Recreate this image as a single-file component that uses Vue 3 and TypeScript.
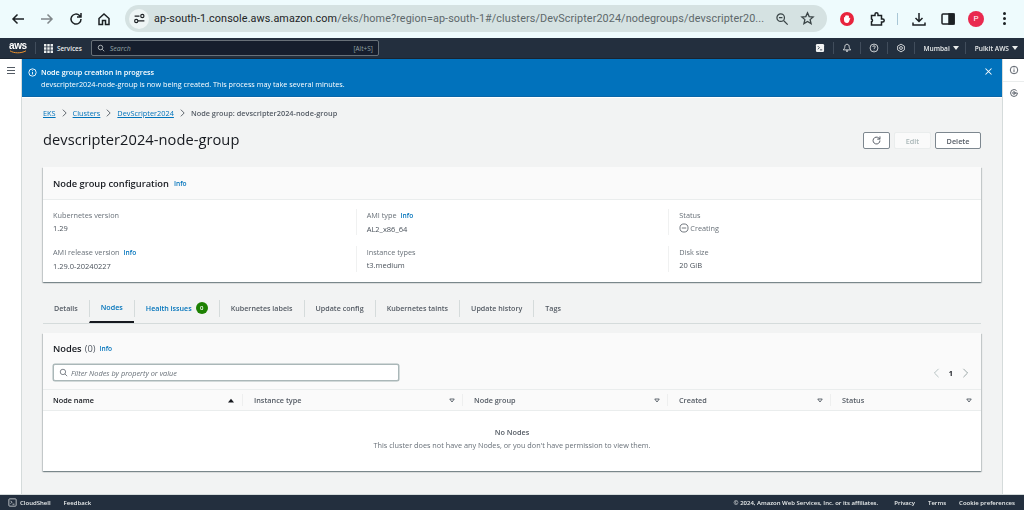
<script setup lang="ts">
interface Field { label: string; value: string; info?: boolean; status?: boolean }
const fields: Field[][] = [
  [{ label: 'Kubernetes version', value: '1.29' }, { label: 'AMI release version', value: '1.29.0-20240227', info: true }],
  [{ label: 'AMI type', value: 'AL2_x86_64', info: true }, { label: 'Instance types', value: 't3.medium' }],
  [{ label: 'Status', value: 'Creating', status: true }, { label: 'Disk size', value: '20 GiB' }],
]
const tabs = ['Details', 'Nodes', 'Health issues', 'Kubernetes labels', 'Update config', 'Kubernetes taints', 'Update history', 'Tags']
const cols = [
  { name: 'Node name', width: 200, sorted: true },
  { name: 'Instance type', width: 220 },
  { name: 'Node group', width: 205 },
  { name: 'Created', width: 163 },
  { name: 'Status', width: 150 },
]
</script>

<template>
  <div class="page">
    <header class="chrome">
      <svg class="ci first" viewBox="0 0 16 16"><path d="M14 8H3M7.500 3.500 3 8l4.500 4.500" /></svg>
      <svg class="ci dim" viewBox="0 0 16 16"><path d="M2 8h11M8.500 3.500 13 8l-4.500 4.500" /></svg>
      <svg class="ci" viewBox="0 0 16 16"><path d="M13 8a5 5 0 1 1-1.500-3.500L13 6M13 2v4H9" /></svg>
      <svg class="ci" viewBox="0 0 16 16"><path d="M3 7.500 8 3l5 4.500V13.500h-3.500V9.500h-3v4H3z" /></svg>
      <div class="omnibox">
        <span class="tune"><svg viewBox="0 0 16 16"><path d="M2 5h6M6 11h8" /><circle cx="11.500" cy="5" r="2" /><circle cx="4" cy="11" r="2" /></svg></span>
        <span class="url"><b>ap-south-1.console.aws.amazon.com</b>/eks/home?region=ap-south-1#/clusters/DevScripter2024/nodegroups/devscripter20...</span>
        <svg class="oi" viewBox="0 0 16 16"><circle cx="6.500" cy="6.500" r="4.300" /><path d="m10 10 4.500 4.500M4.500 6.500h4" /></svg>
        <svg class="oi star" viewBox="0 0 16 16"><path d="m8 2 1.800 4 4.200.4-3.200 2.800 1 4.300L8 11.200 4.200 13.500l1-4.300L2 6.400 6.200 6z" /></svg>
      </div>
      <div class="ext-tools">
        <svg class="adblock" viewBox="0 0 14 14"><circle cx="7" cy="7" r="7" /><path d="M4 5.500c0-.8 1-.8 1.100 0V4c0-.8 1.100-.8 1.200 0v-.5c0-.8 1.200-.8 1.300 0V4c.1-.8 1.300-.8 1.300 0v2.500l.6-.6c.5-.4 1 .1.700.6L8.800 10c-.4.600-1 1-1.800 1-1.800 0-3-1.200-3-3z" /></svg>
        <svg class="ci puzzle" viewBox="0 0 16 16"><path d="M2.500 4.500H6V3.200a1.500 1.500 0 0 1 3 0v1.300h3.500V8h1.200a1.500 1.500 0 0 1 0 3h-1.200v3h-10v-3.200a1.500 1.500 0 0 0 0-2.800z" /></svg>
        <i class="tool-sep"></i>
        <svg class="ci download" viewBox="0 0 16 16"><path d="M8 2v8.500M4.500 7 8 10.500 11.500 7M2 11.500v2.500h12v-2.500" /></svg>
        <svg class="ci side" viewBox="0 0 16 16"><rect x="2" y="3" width="12" height="10" rx="1" /><rect class="solid" x="9" y="3" width="5" height="10" /></svg>
        <span class="avatar">P</span>
        <span class="dots"><i></i><i></i><i></i></span>
      </div>
    </header>

    <nav class="topnav">
      <span class="logo">aws<svg viewBox="0 0 18 4"><path d="M1 .8c4 2.600 11 2.800 16 0" /></svg></span>
      <i class="nav-sep logo-sep"></i>
      <svg class="grid" viewBox="0 0 9 9"><path d="M0 0h2.400v2.400H0zM3.300 0h2.400v2.400H3.300zM6.600 0H9v2.400H6.600zM0 3.300h2.400v2.400H0zM3.300 3.300h2.400v2.400H3.300zM6.600 3.300H9v2.400H6.600zM0 6.600h2.400V9H0zM3.300 6.600h2.400V9H3.300zM6.600 6.600H9V9H6.600z" /></svg>
      <span class="services">Services</span>
      <div class="search">
        <svg viewBox="0 0 16 16"><circle cx="7" cy="7" r="4.500" /><path d="m10.500 10.500 4 4" /></svg>
        <em>Search</em>
        <span>[Alt+S]</span>
      </div>
      <div class="nav-right">
        <svg class="ni" viewBox="0 0 16 16"><rect class="solid-w" x="1.500" y="1.500" width="13" height="13" rx="2" /><path class="dk" d="m4.500 5 2.500 2.500L4.500 10M8 11h3.500" /></svg>
        <i class="nav-sep"></i>
        <svg class="ni" viewBox="0 0 16 16"><path d="M8 2c2.400 0 3.500 1.800 3.500 4 0 2 1 3.300 2.500 5H2c1.500-1.700 2.500-3 2.500-5C4.500 3.800 5.600 2 8 2z" /><path class="fw" d="M6 12h4a2 2 0 0 1-4 0z" /></svg>
        <i class="nav-sep"></i>
        <svg class="ni" viewBox="0 0 16 16"><circle cx="8" cy="8" r="6.300" /><path d="M6 6.300c0-2.600 4-2.600 4 0 0 1.600-2 1.600-2 3.200M8 11v1" /></svg>
        <i class="nav-sep"></i>
        <svg class="ni" viewBox="0 0 16 16"><path d="M8 1.800 13.400 5v6L8 14.200 2.600 11V5z" /><circle cx="8" cy="8" r="2.300" /></svg>
        <i class="nav-sep"></i>
        <span class="menu region">Mumbai <i class="caret"></i></span>
        <i class="nav-sep"></i>
        <span class="menu user">Pulkit AWS <i class="caret"></i></span>
      </div>
    </nav>

    <div class="workspace">
      <aside class="rail-left">
        <span class="burger"><i></i><i></i><i></i></span>
      </aside>

      <main class="main">
        <section class="flash">
          <svg class="flash-icon" viewBox="0 0 16 16"><circle cx="8" cy="8" r="6.500" /><path d="M8 7v4.500M8 4v1.500" /></svg>
          <div class="flash-text">
            <strong>Node group creation in progress</strong>
            <p>devscripter2024-node-group is now being created. This process may take several minutes.</p>
          </div>
          <svg class="flash-close" viewBox="0 0 12 12"><path d="m2 2 8 8M10 2l-8 8" /></svg>
        </section>

        <div class="content">
          <div class="crumbs">
            <a>EKS</a><svg viewBox="0 0 8 12"><path d="m2 2 4 4-4 4" /></svg>
            <a>Clusters</a><svg viewBox="0 0 8 12"><path d="m2 2 4 4-4 4" /></svg>
            <a>DevScripter2024</a><svg viewBox="0 0 8 12"><path d="m2 2 4 4-4 4" /></svg>
            <span>Node group: devscripter2024-node-group</span>
          </div>

          <div class="title-row">
            <h1>devscripter2024-node-group</h1>
            <div class="actions">
              <button class="btn icon-btn"><svg viewBox="0 0 16 16"><path d="M13 8a5 5 0 1 1-1.500-3.500L13 6M13 2v4H9" /></svg></button>
              <button class="btn disabled">Edit</button>
              <button class="btn delete">Delete</button>
            </div>
          </div>

          <section class="card config">
            <div class="card-head config-head">
              <h2>Node group configuration</h2><a class="info head-info">Info</a>
            </div>
            <div class="config-grid">
              <div v-for="(col, i) in fields" :key="i" class="config-col">
                <div v-for="f in col" :key="f.label" class="field">
                  <div class="label">{{ f.label }}<a v-if="f.info" class="info">Info</a></div>
                  <div class="value" :class="{ pending: f.status }">
                    <svg v-if="f.status" viewBox="0 0 16 16"><circle cx="8" cy="8" r="6.500" /><path d="M4.500 8h7" /></svg>
                    {{ f.value }}
                  </div>
                </div>
              </div>
            </div>
          </section>

          <div class="tabs">
            <div v-for="(t, i) in tabs" :key="t" class="tab" :class="{ active: i === 1, alert: i === 2, first: i === 0 }">
              <span>{{ t }}</span><b v-if="i === 2" class="badge">0</b>
            </div>
          </div>

          <section class="card nodes">
            <div class="card-head nodes-head">
              <div class="nodes-title"><h2>Nodes</h2><span class="count">(0)</span><a class="info">Info</a></div>
              <div class="filter-row">
                <div class="filter">
                  <svg viewBox="0 0 16 16"><circle cx="7" cy="7" r="4.800" /><path d="m10.500 10.500 4 4" /></svg>
                  <em>Filter Nodes by property or value</em>
                </div>
                <div class="pager">
                  <svg viewBox="0 0 8 12"><path d="M6.500 1 1.500 6l5 5" /></svg>
                  <b>1</b>
                  <svg viewBox="0 0 8 12"><path d="m1.500 1 5 5-5 5" /></svg>
                </div>
              </div>
            </div>
            <div class="thead">
              <div v-for="(c, i) in cols" :key="c.name" class="th" :class="{ 'th-active': c.sorted, last: i === 4 }" :style="{ width: c.width + 'px' }">
                <span>{{ c.name }}</span>
                <svg v-if="c.sorted" class="sort" viewBox="0 0 8 6"><path d="M4 .5 8 5.500H0z" /></svg>
                <svg v-else class="sort open" viewBox="0 0 8 6"><path d="M1 1h6L4 5z" /></svg>
              </div>
            </div>
            <div class="empty">
              <strong>No Nodes</strong>
              <p>This cluster does not have any Nodes, or you don't have permission to view them.</p>
            </div>
          </section>
        </div>
      </main>

      <aside class="rail-right">
        <div class="rail-btn top"><svg viewBox="0 0 16 16"><circle cx="8" cy="8" r="6" /><path d="M8 7v4.500M8 4v1.500" /></svg></div>
        <div class="rail-btn"><svg viewBox="0 0 16 16"><path d="M13.500 8A5.500 5.500 0 1 1 8 2.500c2 0 3.500 1 4.500 2.500" /><circle cx="8" cy="8" r="2" /><path d="M8 8h5.500" /></svg></div>
      </aside>
    </div>

    <footer class="footer">
      <svg class="shell" viewBox="0 0 16 16"><rect x="1.500" y="1.500" width="13" height="13" rx="1.500" /><path d="m4.500 5 2.500 2.500L4.500 10M8 11h3.500" /></svg>
      <span>CloudShell</span>
      <span class="feedback">Feedback</span>
      <div class="legal">
        <span class="copy">© 2024, Amazon Web Services, Inc. or its affiliates.</span>
        <span>Privacy</span>
        <span>Terms</span>
        <span>Cookie preferences</span>
      </div>
    </footer>
  </div>
</template>

<style>
html, body { margin: 0; background: #fff; }
</style>

<style scoped>
.page {
  width: 1024px; height: 510px; overflow: hidden; display: flex; flex-direction: column;
  font-family: "Open Sans", "Noto Sans", sans-serif; color: #16191f; font-size: 8px;
  filter: blur(.3px);
}
p, h1, h2 { margin: 0; }
svg { fill: none; stroke: currentColor; flex: none; display: block; }
i { display: block; font-style: normal; }

/* Browser toolbar */
.chrome { height: 38px; flex: none; display: flex; align-items: center; background: #eefbfd; color: #1c2124; box-sizing: border-box; padding-bottom: 1px; }
.ci { width: 16px; height: 16px; stroke-width: 1.500; margin-right: 12.750px; }
.ci.first { margin-left: 10px; }
.ci.dim { color: #80878a; }
.omnibox { width: 702px; height: 27px; border-radius: 14px; background: #d5e2e2; display: flex; align-items: center; box-sizing: border-box; padding: 0 12px 0 4px; flex: none; }
.tune { width: 20px; height: 20px; border-radius: 50%; background: #eef5f5; display: flex; align-items: center; justify-content: center; margin-right: 5px; flex: none; }
.tune svg { width: 13px; height: 13px; stroke-width: 1.400; }
.url { font-size: 10.800px; color: #5d686a; white-space: nowrap; flex: 1; min-width: 0; font-family: Roboto, sans-serif; letter-spacing: .1px; }
.url b { font-weight: 400; color: #1e2426; }
.oi { width: 14px; height: 14px; stroke-width: 1.400; color: #3a4446; margin-left: 11px; }
.oi.star { width: 15px; height: 15px; }
.ext-tools { display: flex; align-items: center; margin-left: 13px; }
.adblock { width: 14px; height: 14px; margin-right: 15px; stroke: none; }
.adblock circle { fill: #e8233d; }
.adblock path { fill: #fff; }
.ext-tools .ci { margin-right: 13px; }
.ext-tools .puzzle { margin-right: 12px; }
.tool-sep { width: 1px; height: 12px; background: #a9c7d6; margin-right: 13px; }
.ext-tools .side { margin-right: 12px; }
.side .solid { fill: #1c2124; }
.avatar { width: 16px; height: 16px; border-radius: 50%; background: #e9294f; color: #fff; font-size: 8px; display: flex; align-items: center; justify-content: center; font-family: Roboto, sans-serif; }
.dots { display: flex; flex-direction: column; gap: 2px; margin-left: 19px; }
.dots i { width: 3px; height: 3px; border-radius: 50%; background: #1c2124; }

/* AWS nav */
.topnav { height: 21px; flex: none; background: #232f3e; color: #eaeded; display: flex; align-items: center; border-bottom: 1px solid #1a2430; box-sizing: border-box; font-size: 7px; }
.logo { width: 18px; margin-left: 9px; font: 700 10px/7px "Liberation Sans", sans-serif; color: #fff; letter-spacing: -.4px; position: relative; height: 13px; }
.logo svg { width: 18px; height: 4px; stroke: #ec912d; stroke-width: 1; position: absolute; left: 0; top: 8px; }
.nav-sep { width: 1px; height: 12px; background: #414d5c; }
.logo-sep { margin: 0 8px; }
.grid { width: 9px; height: 9px; fill: #eaeded; stroke: none; }
.services { margin: 0 9px 0 4px; font-weight: 600; font-size: 6.300px; }
.search { width: 288px; height: 16px; background: #161e2d; border: 1px solid #687078; border-radius: 2px; box-sizing: border-box; display: flex; align-items: center; padding: 0 5px; color: #95a5a6; }
.search svg { width: 8px; height: 8px; stroke-width: 1.500; color: #d5dbdb; margin-right: 5px; }
.search em { flex: 1; font-size: 7px; }
.search span { font-size: 6.400px; }
.nav-right { margin-left: auto; display: flex; align-items: center; padding-right: 6px; font-size: 6.600px; }
.ni { width: 10px; height: 10px; stroke-width: 1.300; margin: 0 8px; color: #f2f3f3; }
.ni .solid-w { fill: #f2f3f3; stroke: none; }
.ni .dk { stroke: #232f3e; }
.ni .fw { fill: #f2f3f3; stroke: none; }
.menu { display: flex; align-items: center; gap: 3px; font-weight: 600; }
.region { margin: 0 6px 0 8px; }
.user { margin-left: 9px; }
.caret { width: 0; height: 0; border: 3px solid transparent; border-top: 4px solid #eaeded; border-bottom: 0; }

/* Workspace */
.workspace { flex: 1; min-height: 0; display: flex; }
.rail-left { width: 21px; flex: none; background: #fff; border-right: 1px solid #d5dbdb; }
.burger { display: flex; flex-direction: column; gap: 2px; margin: 8px 0 0 7px; }
.burger i { width: 8px; height: 1px; background: #545b64; }
.main { flex: 1; min-width: 0; display: flex; flex-direction: column; background: #f2f3f3; }
.rail-right { width: 21px; flex: none; background: #fff; border-left: 1px solid #d5dbdb; margin-left: -1px; }
.rail-btn { height: 22px; display: flex; align-items: center; justify-content: center; color: #545b64; }
.rail-btn.top { border-bottom: 1px solid #eaeded; }
.rail-btn svg { width: 10px; height: 10px; stroke-width: 1.500; }

.flash { height: 38px; flex: none; background: #0172bc; color: #fff; display: flex; align-items: flex-start; box-sizing: border-box; padding: 7px 10px 0 6px; border-bottom: 1px solid #0a66a8; }
.flash-icon { width: 9px; height: 9px; stroke-width: 1.600; margin: 2px 4px 0 0; }
.flash-text { flex: 1; font-size: 7.250px; line-height: 12px; }
.flash-text strong { font-weight: 600; display: block; }
.flash-close { width: 9px; height: 9px; stroke-width: 1.400; margin-top: 1px; }

.content { flex: 1; padding: 10px 22px 0 21px; min-height: 0; border-top: 1px solid #fff; }
.crumbs { display: flex; align-items: center; height: 10px; font-size: 7.350px; color: #0073bb; }
.crumbs a { text-decoration: underline; }
.crumbs svg { width: 7px; height: 10px; stroke: #545b64; stroke-width: 1.100; margin: 0 5px; }
.crumbs span { color: #545b64; font-weight: 600; }

.title-row { display: flex; justify-content: space-between; align-items: flex-start; margin-top: 14px; height: 17px; }
h1 { font-size: 14.650px; line-height: 14px; font-weight: 400; color: #16191f; letter-spacing: .05px; white-space: nowrap; }
.actions { display: flex; gap: 4px; }
.btn { font: 600 7.300px "Open Sans", sans-serif; height: 17px; box-sizing: border-box; background: #fff; border: 1px solid #7d878f; border-radius: 2px; color: #545b64; padding: 0; display: flex; align-items: center; justify-content: center; }
.icon-btn { width: 27px; color: #545b64; }
.icon-btn svg { width: 11px; height: 11px; stroke-width: 1.400; }
.disabled { width: 37px; border-color: #eaeded; background: #fafafa; color: #aab7b8; }
.delete { width: 46px; }

.card { background: #fff; box-shadow: 0 1px 1px rgba(0, 28, 36, .3), 1px 1px 1px rgba(0, 28, 36, .15), -1px 1px 1px rgba(0, 28, 36, .15); }
.card-head { background: #fafafa; box-sizing: border-box; }
.config { margin-top: 18px; height: 115px; }
.config-head { height: 33px; border-bottom: 1px solid #eaeded; display: flex; align-items: center; padding: 0 10px; }
h2 { font-size: 9.300px; font-weight: 600; color: #16191f; white-space: nowrap; }
.info { font-size: 6.600px; font-weight: 600; color: #0073bb; margin-left: 4px; }
.head-info { margin-left: 5px; }
.config-grid { display: grid; grid-template-columns: repeat(3, 1fr); }
.config-col { padding-top: 9px; }
.config-col + .config-col .field { border-left: 1px solid #f0f1f1; }
.field { height: 26px; margin-bottom: 11px; box-sizing: border-box; padding-left: 10px; font-size: 7.300px; line-height: 12.500px; }
.label { color: #687078; }
.value { color: #4a525b; font-size: 7.500px; line-height: 12px; }
.pending { display: flex; align-items: center; gap: 1px; color: #687078; font-size: 7.300px; }
.pending svg { width: 10px; height: 10px; stroke-width: 1.300; color: #545b64; }

.tabs { display: flex; margin-top: 18px; height: 24px; border-bottom: 1px solid #d5dbdb; box-sizing: border-box; align-items: flex-start; }
.tab { height: 23px; padding: 0 11px; display: flex; align-items: center; font-size: 7.150px; font-weight: 600; color: #545b64; border-left: 1px solid transparent; box-sizing: border-box; position: relative; white-space: nowrap; }
.tab + .tab::before { content: ""; position: absolute; left: -1px; top: 0; width: 1px; height: 17px; background: #d5dbdb; }
.tab.first { padding-left: 10px; }
.tab span { position: relative; top: -4px; }
.tab.active { color: #0073bb; border-bottom: 2px solid #16191f; }
.tab.alert { color: #0073bb; }
.badge { position: relative; top: -4px; width: 12px; height: 12px; border-radius: 50%; background: #1d8102; color: #fff; font-size: 6px; font-weight: 600; display: flex; align-items: center; justify-content: center; margin-left: 4px; }

.nodes { margin-top: 9px; height: 138px; }
.nodes-head { height: 56px; padding: 7px 10px 0; }
.nodes-title { display: flex; align-items: center; height: 16px; }
.count { font-size: 9.300px; color: #545b64; margin-left: 3px; }
.filter-row { display: flex; justify-content: space-between; align-items: center; margin-top: 8px; }
.filter { width: 346px; height: 17px; background: #fff; border: 1px solid #aab7b8; box-shadow: 0 0 0 .5px #aab7b8; border-radius: 2px; box-sizing: border-box; display: flex; align-items: center; padding: 0 5px; color: #687078; }
.filter svg { width: 9px; height: 9px; stroke-width: 1.300; color: #545b64; margin-right: 3px; }
.filter em { font-size: 7.350px; }
.pager { display: flex; align-items: center; gap: 9px; margin-right: 2px; color: #aab7b8; }
.pager svg { width: 7px; height: 10px; stroke-width: 1; }
.pager svg:last-child { color: #879596; }
.pager b { color: #16191f; font-size: 7.300px; font-weight: 700; }
.thead { display: flex; height: 20px; background: #fafafa; border-top: 1px solid #eaeded; border-bottom: 1px solid #eaeded; }
.th { display: flex; align-items: center; justify-content: space-between; box-sizing: border-box; padding: 0 6px 0 11px; font-size: 7.300px; font-weight: 600; color: #545b64; position: relative; }
.th:first-child { padding-left: 10px; }
.th.last { padding-right: 7px; }
.th:not(.last)::after { content: ""; position: absolute; right: 0; top: 4px; height: 12px; width: 1px; background: #eeefef; }
.th.th-active { color: #16191f; padding-right: 7px; }
.sort { width: 6px; height: 5px; margin-right: 2px; }
.sort path { fill: #16191f; stroke: none; }
.sort.open path { fill: none; stroke: #545b64; stroke-width: 1.200; }
.empty { text-align: center; padding-top: 15px; font-size: 7.300px; line-height: 13px; color: #687078; }
.empty strong { display: block; font-weight: 600; color: #545b64; }

.footer { height: 15px; flex: none; background: #232f3e; color: #eaeded; display: flex; align-items: center; font-size: 6px; font-weight: 600; padding: 0 9px 0 8px; border-top: 1px solid #d5dbdb; margin-top: -1px; }
.shell { width: 9px; height: 9px; stroke-width: 1.300; margin-right: 3px; }
.feedback { margin-left: 13px; }
.legal { margin-left: auto; display: flex; gap: 13px; }
.copy { margin-right: 3px; }
</style>
